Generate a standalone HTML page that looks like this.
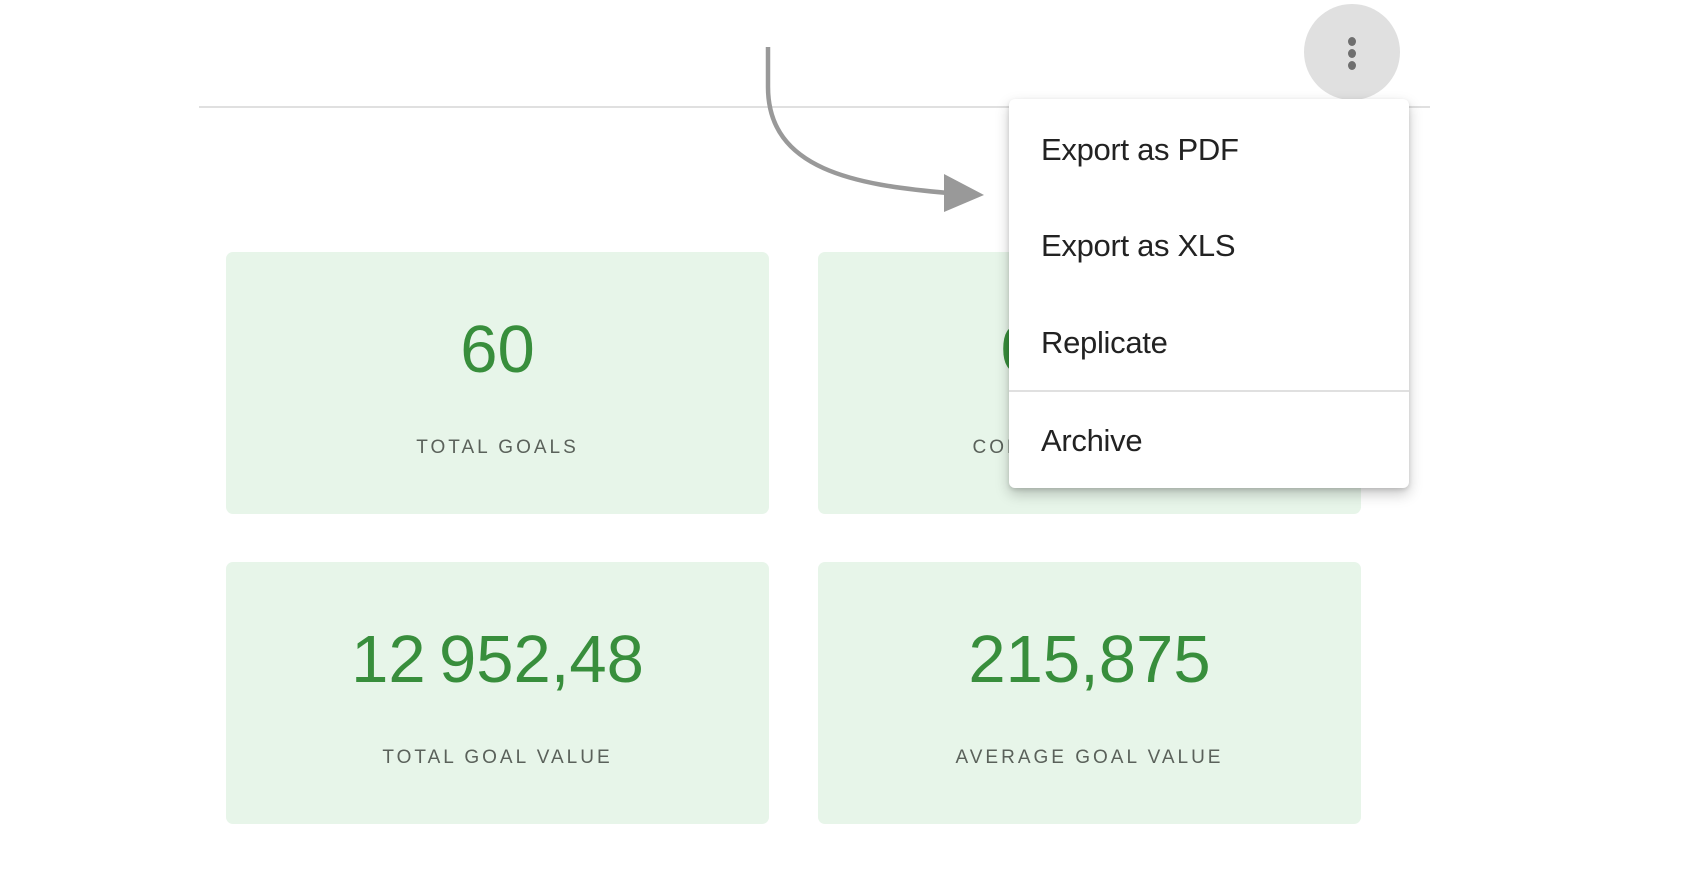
<!DOCTYPE html>
<html><head><style>
body{margin:0;width:1694px;height:892px;background:#fff;position:relative;overflow:hidden;font-family:"Liberation Sans",sans-serif}
.line{position:absolute;left:199px;top:106px;width:1231px;height:2px;background:#e0e0e0}
.btn{position:absolute;left:1304px;top:4px;width:96px;height:96px;border-radius:50%;background:#e0e0e0}
.dot{position:absolute;left:44px;width:8px;height:9px;border-radius:50%;background:#6f6f6f}
.card{position:absolute;width:543px;height:262px;background:#e7f5e9;border-radius:7px;text-align:center}
.num{position:absolute;left:0;right:0;top:53px;font-size:67px;color:#388e3c;line-height:90px}
.lab{position:absolute;left:0;right:0;top:184px;font-size:19px;letter-spacing:3px;color:#5a615a;line-height:24px}
.menu{position:absolute;left:1009px;top:99px;width:400px;height:389px;background:#fff;border-radius:6px;box-shadow:0 6px 14px rgba(0,0,0,.22),0 2px 4px rgba(0,0,0,.12)}
.it{position:absolute;left:32px;font-size:31px;color:#222;line-height:40px;letter-spacing:-0.3px}
.div{position:absolute;left:0;right:0;top:291px;height:2px;background:#e0e0e0}
</style></head><body>
<div class="line"></div>
<div class="btn"><div class="dot" style="top:33px"></div><div class="dot" style="top:45px"></div><div class="dot" style="top:57px"></div></div>
<svg style="position:absolute;left:0;top:0" width="1694" height="892">
<path d="M768 47 L768 87 C768 170 856 185 948 193" fill="none" stroke="#999" stroke-width="4.5"/>
<polygon points="944,174 984,195 944,212" fill="#999"/>
</svg>
<div class="card" style="left:226px;top:252px"><div class="num">60</div><div class="lab">TOTAL GOALS</div></div>
<div class="card" style="left:818px;top:252px"><div class="num" style="letter-spacing:2px">0,583</div><div class="lab">COMPLETED GOALS</div></div>
<div class="card" style="left:226px;top:562px"><div class="num">12&#8201;952,48</div><div class="lab">TOTAL GOAL VALUE</div></div>
<div class="card" style="left:818px;top:562px"><div class="num">215,875</div><div class="lab">AVERAGE GOAL VALUE</div></div>
<div class="menu">
<div class="it" style="top:31px">Export as PDF</div>
<div class="it" style="top:127px">Export as XLS</div>
<div class="it" style="top:224px">Replicate</div>
<div class="div"></div>
<div class="it" style="top:322px">Archive</div>
</div>
</body></html>
